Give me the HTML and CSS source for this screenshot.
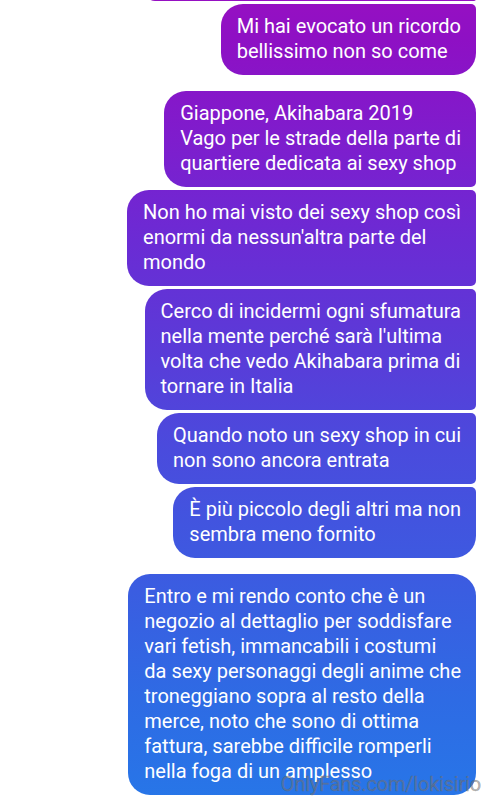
FILE: index.html
```html
<!DOCTYPE html>
<html lang="it">
<head>
    <meta charset="UTF-8">
    <meta name="viewport" content="width=device-width, initial-scale=1.0">
    <title>Chat</title>
    <link rel="stylesheet" href="styles.css">
</head>
<body>
<div class="thread">
    <div class="bubble bubble-cut"></div>
    <div class="bubble tail-bottom">Mi hai evocato un ricordo<br>bellissimo non so come</div>

    <div class="spacer"></div>
    <div class="bubble tail-top">Giappone, Akihabara 2019<br>Vago per le strade della parte di<br>quartiere dedicata ai sexy shop</div>
    <div class="bubble">Non ho mai visto dei sexy shop così<br>enormi da nessun'altra parte del<br>mondo</div>
    <div class="bubble">Cerco di incidermi ogni sfumatura<br>nella mente perché sarà l'ultima<br>volta che vedo Akihabara prima di<br>tornare in Italia</div>
    <div class="bubble">Quando noto un sexy shop in cui<br>non sono ancora entrata</div>
    <div class="bubble tail-bottom">È più piccolo degli altri ma non<br>sembra meno fornito</div>

    <div class="spacer"></div>
    <div class="bubble tail-top tail-bottom">Entro e mi rendo conto che è un<br>negozio al dettaglio per soddisfare<br>vari fetish, immancabili i costumi<br>da sexy personaggi degli anime che<br>troneggiano sopra al resto della<br>merce, noto che sono di ottima<br>fattura, sarebbe difficile romperli<br>nella foga di un amplesso</div>
</div>

<div class="watermark">OnlyFans.com/lokisirio</div>
</body>
</html>
```

FILE: styles.css
```css
body {
    margin: 0;
    background: #fff;
    font-family: Roboto, "Noto Sans", sans-serif;
    overflow: hidden;
}
.thread {
    display: flex;
    flex-direction: column;
    align-items: flex-end;
    gap: 3px;
    padding-right: 10px;
    margin-top: -19px;
}
/* one gradient for the whole screen, each bubble shows its slice */
.bubble {
    padding: 10px 15px 11px 16px;
    color: #fff;
    font-size: 20px;
    line-height: 25px;
    white-space: nowrap;
    border-radius: 22px 5px 5px 22px;
    background: linear-gradient(to bottom,
        #9610c2 0px,
        #8e10c4 40px,
        #7e1dcd 140px,
        #6b2bd4 240px,
        #5a3bd8 350px,
        #4a4bdd 450px,
        #4254df 520px,
        #2e6be4 700px,
        #2776e8 800px);
    background-attachment: fixed;
}
.bubble-cut {
    width: 331px;
    height: 20px;
    padding: 0;
}
.tail-top { border-top-right-radius: 22px; }
.tail-bottom { border-bottom-right-radius: 22px; }
.spacer { height: 10px; }
.watermark {
    position: absolute;
    right: 5px;
    bottom: 4px;
    font-size: 20px;
    letter-spacing: -0.2px;
    color: rgba(120, 120, 120, 0.55);
    -webkit-text-stroke: 0.4px rgba(90, 90, 90, 0.5);
}
```
